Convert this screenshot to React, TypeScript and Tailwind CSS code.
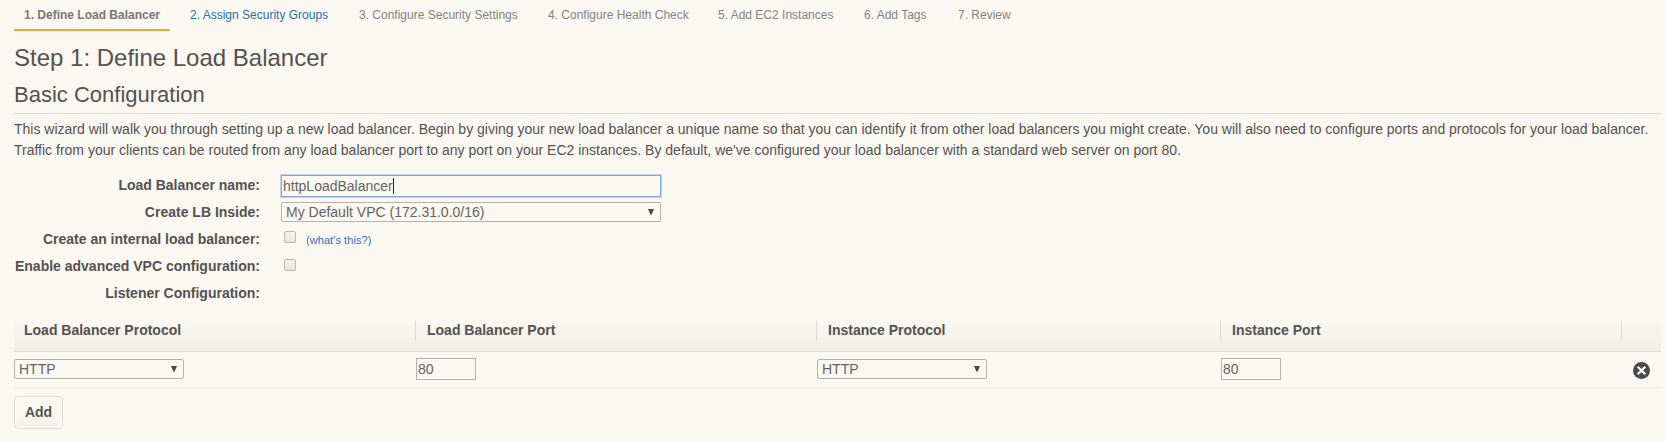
import React from "react";

const steps = [
  { label: "1. Define Load Balancer", width: "w-[156px]", tone: "font-bold text-[#7a7874] border-b-2 border-[#e4a945]" },
  { label: "2. Assign Security Groups", width: "w-[159px]", tone: "text-[#2a70a8]" },
  { label: "3. Configure Security Settings", width: "w-[179px]", tone: "text-[#85837f]" },
  { label: "4. Configure Health Check", width: "w-[160px]", tone: "text-[#85837f]" },
  { label: "5. Add EC2 Instances", width: "w-[136px]", tone: "text-[#85837f]" },
  { label: "6. Add Tags", width: "w-[84px]", tone: "text-[#85837f]" },
  { label: "7. Review", width: "w-[74px]", tone: "text-[#85837f]" },
];

function Select({ value, width }: { value: string; width: string }) {
  return (
    <div className={`relative h-5 ${width}`}>
      <select className="block h-5 w-full appearance-none rounded-[2px] border border-[#b5b2ae] bg-transparent pl-1 text-sm leading-[18px] text-[#666460]">
        <option>{value}</option>
      </select>
      <svg className="pointer-events-none absolute right-[7px] top-[7px] h-[6px] w-[6px]" viewBox="0 0 6 6">
        <path d="M0 0h6L3.5 5.8H2.5z" fill="#4b4945" />
      </svg>
    </div>
  );
}

function Port() {
  return (
    <input
      defaultValue="80"
      className="block h-[22px] w-[60px] border border-[#b5b2ae] bg-transparent px-px text-sm leading-5 text-[#666460]"
    />
  );
}

function Checkbox() {
  return (
    <span className="block h-3 w-3 rounded-[2px] border border-[#bab7b3] bg-linear-to-b from-[#f5f1ec] to-[#e9e6e0]" />
  );
}

function Field({ label, children }: { label: string; children?: React.ReactNode }) {
  return (
    <div className="flex h-[27px]">
      <div className="w-[246px] shrink-0 whitespace-nowrap text-right text-sm font-bold leading-[26px]">{label}</div>
      <div className="ml-[21px]">{children}</div>
    </div>
  );
}

const columns = [
  { label: "Load Balancer Protocol", width: "w-[402px]", pad: "pl-[10px]" },
  { label: "Load Balancer Port", width: "w-[401px]", pad: "pl-[11px]" },
  { label: "Instance Protocol", width: "w-[404px]", pad: "pl-[11px]" },
  { label: "Instance Port", width: "w-[401px]", pad: "pl-[11px]" },
];

export default function App() {
  return (
    <div className="h-[442px] w-[1665px] overflow-hidden bg-[#fbf8f1] pl-[14px] pr-1 font-['Liberation_Sans',Arial,sans-serif] text-[#545250]">
      <nav className="flex h-[31px] gap-[10px] whitespace-nowrap text-xs">
        {steps.map((s) => (
          <div key={s.label} className={`h-[31px] shrink-0 pl-[10px] leading-[30px] ${s.width} ${s.tone}`}>
            {s.label}
          </div>
        ))}
      </nav>

      <h1 className="mt-3 h-[30px] text-2xl leading-[30px]">Step 1: Define Load Balancer</h1>
      <h2 className="h-[41px] border-b border-[#dddad3] pt-[9px] text-[22px] leading-[26px]">Basic Configuration</h2>

      <p className="mt-[5px] whitespace-nowrap text-sm leading-[21px]">
        This wizard will walk you through setting up a new load balancer. Begin by giving your new load balancer a
        unique name so that you can identify it from other load balancers you might create. You will also need to
        configure ports and protocols for your load balancer.
        <br />
        Traffic from your clients can be routed from any load balancer port to any port on your EC2 instances. By
        default, we've configured your load balancer with a standard web server on port 80.
      </p>

      <form className="mt-[11px]">
        <Field label="Load Balancer name:">
          <div className="mt-[3px] flex h-[22px] w-[380px] items-center border border-[#85a3d3] pl-px text-sm text-[#666460] shadow-[0_0_0_1px_#c5d5e6]">
            <span>httpLoadBalancer</span>
            <span className="h-4 w-px bg-[#222]" />
          </div>
        </Field>
        <Field label="Create LB Inside:">
          <div className="pt-[3px]">
            <Select value="My Default VPC (172.31.0.0/16)" width="w-[380px]" />
          </div>
        </Field>
        <Field label="Create an internal load balancer:">
          <div className="flex pl-[3px] pt-[5px]">
            <Checkbox />
            <a className="ml-[10px] pt-[2px] text-[11px] leading-[14px] tracking-[0.07px] text-[#2e71b5]">(what's this?)</a>
          </div>
        </Field>
        <Field label="Enable advanced VPC configuration:">
          <div className="pl-[3px] pt-[6px]">
            <Checkbox />
          </div>
        </Field>
        <Field label="Listener Configuration:" />
      </form>

      <section className="w-[1647px]">
        <div className="mt-[3px] flex h-[42px] border-b border-[#dddad3] bg-linear-to-b from-[#fbf8f1] from-25% to-[#f1eee8] pt-[11px]">
          {columns.map((c) => (
            <div
              key={c.label}
              className={`h-[19px] border-r border-[#dad7d1] text-sm font-bold leading-[18px] ${c.width} ${c.pad}`}
            >
              {c.label}
            </div>
          ))}
        </div>
        <div className="flex h-9 items-center border-b border-[#f2efe8] pb-[1px]">
          <div className="w-[402px]"><Select value="HTTP" width="w-[170px]" /></div>
          <div className="w-[401px]"><Port /></div>
          <div className="w-[404px]"><Select value="HTTP" width="w-[170px]" /></div>
          <div className="w-[401px]"><Port /></div>
          <svg className="ml-[11px] mt-[2px] h-[17px] w-[17px]" viewBox="0 0 17 17">
            <circle cx="8.5" cy="8.5" r="8.5" fill="#4d4b49" />
            <path d="M4.7 4.7l7.6 7.6M12.3 4.7l-7.6 7.6" stroke="#fff" strokeWidth="2.2" />
          </svg>
        </div>
      </section>

      <button className="mt-2 block h-[33px] w-[49px] rounded-[4px] border border-[#dfdcd5] bg-[#fbf8f1] p-[2px] text-sm font-bold">
        <span className="block h-full bg-linear-to-b from-[#fbf8f1] from-60% to-[#f3f0e9] leading-[27px]">Add</span>
      </button>
    </div>
  );
}
